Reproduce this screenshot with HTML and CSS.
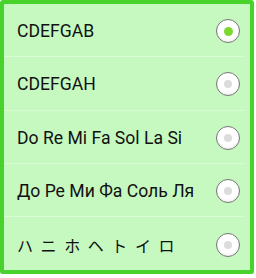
FILE: index.html
```html
<!DOCTYPE html>
<html lang="en">
<head>
  <meta charset="UTF-8">
  <title>Notation</title>
  <link rel="stylesheet" href="styles.css">
</head>
<body>
  <div class="dialog">
    <ul class="choices">
      <li class="choice"><span class="label">CDEFGAB</span><span class="radio checked"></span></li>
      <li class="choice"><span class="label">CDEFGAH</span><span class="radio"></span></li>
      <li class="choice"><span class="label">Do Re Mi Fa Sol La Si</span><span class="radio"></span></li>
      <li class="choice"><span class="label">До Ре Ми Фа Соль Ля</span><span class="radio"></span></li>
      <li class="choice"><span class="label jp">ハ ニ ホ ヘ ト イ ロ</span><span class="radio"></span></li>
    </ul>
  </div>
</body>
</html>
```

FILE: styles.css
```css
* { box-sizing: border-box; }
body { margin: 0; background: #fff; font-family: Roboto, "Noto Sans CJK JP", sans-serif; }
.dialog { width: 254px; border: 4px solid #47d32c; border-radius: 3px; background: #c6f9bf; box-shadow: 0 1px 1px rgba(0,0,0,0.15); }
.choices { list-style: none; margin: 0; padding: 0; }
.choice { display: flex; align-items: center; justify-content: space-between; height: 53.3px; padding: 2px 4px 0 13px; border-bottom: 1px solid #d7fcd1; margin-right: 6px; }
.choice:last-child { border-bottom: none; }
.label { font-size: 17.6px; color: #111; }
.jp { font-family: "Noto Sans CJK JP", sans-serif; font-size: 16px; letter-spacing: 2px; }
.radio { width: 24px; height: 24px; border-radius: 50%; border: 1px solid #777; background: radial-gradient(circle at 50% 40%, #fff 55%, #e4e4e4 100%); display: flex; align-items: center; justify-content: center; }
.radio::after { content: ""; width: 8px; height: 8px; border-radius: 50%; background: #dcdcdc; }
.radio.checked::after { width: 9px; height: 9px; background: #7bd92e; }
```
